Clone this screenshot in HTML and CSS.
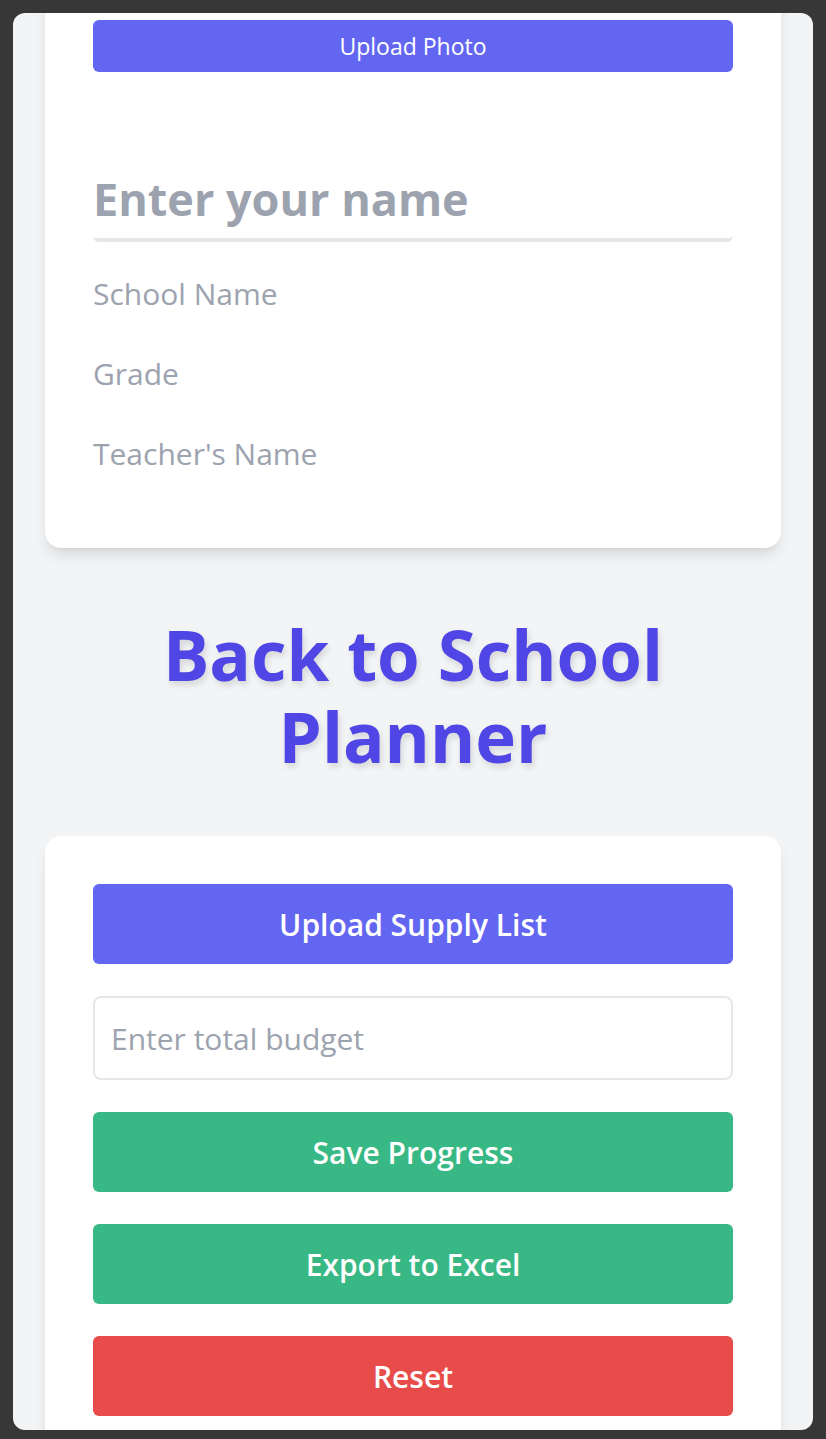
FILE: index.html
```html
<!DOCTYPE html>
<html lang="en">
<head>
<meta charset="utf-8">
<title>Back to School Planner</title>
<link rel="stylesheet" href="styles.css">
</head>
<body>
<div class="window">
  <div class="content">
    <section class="card profile">
      <button class="btn btn-photo">Upload Photo</button>
      <input class="name-input" type="text" placeholder="Enter your name">
      <div class="fields">
        <input class="field" type="text" placeholder="School Name">
        <input class="field" type="text" placeholder="Grade">
        <input class="field" type="text" placeholder="Teacher's Name">
      </div>
    </section>
    <h1 class="title">Back to School Planner</h1>
    <section class="card actions">
      <button class="btn btn-big btn-indigo">Upload Supply List</button>
      <input class="budget" type="text" placeholder="Enter total budget">
      <button class="btn btn-big btn-green">Save Progress</button>
      <button class="btn btn-big btn-green">Export to Excel</button>
      <button class="btn btn-big btn-red">Reset</button>
    </section>
  </div>
</div>
</body>
</html>
```
FILE: styles.css
```css
* { box-sizing: border-box; }
html, body { margin: 0; padding: 0; }
body {
  background: #373737;
  font-family: "Open Sans", "Noto Sans", sans-serif;
  height: 1439px;
  overflow: hidden;
}
.window {
  margin: 13px 13px 0 13px;
  height: 1417px;
  border-radius: 12px;
  overflow: hidden;
  background: #f3f4f6;
}
.content {
  margin-top: -41px;
  padding: 0 32px;
}
.card {
  background: #ffffff;
  border-radius: 16px;
  box-shadow: 0 10px 15px -3px rgba(0,0,0,0.1), 0 4px 6px -4px rgba(0,0,0,0.1);
  padding: 48px;
}
.profile { padding-bottom: 54px; display: flex; flex-direction: column; }
.btn {
  display: block;
  width: 100%;
  border: none;
  color: #fff;
  font-family: inherit;
  border-radius: 6px;
  cursor: pointer;
}
.btn-photo {
  height: 52px;
  background: #6366f1;
  font-size: 23px;
  font-weight: 400;
}
.name-input {
  margin-top: 94px;
  height: 76px;
  border: none;
  border-bottom: 4px solid #e5e7eb;
  border-radius: 0 0 6px 6px;
  padding: 0 0 8px 0;
  font-family: inherit;
  font-size: 45px;
  font-weight: 700;
  color: #374151;
  outline: none;
  background: transparent;
}
.name-input::placeholder { color: #9ca3af; }
.fields {
  margin-top: 12px;
  display: flex;
  flex-direction: column;
}
.field {
  height: 80px;
  border: none;
  padding: 0 0 2px 0;
  font-family: inherit;
  font-size: 30px;
  color: #374151;
  outline: none;
  background: transparent;
}
.field::placeholder { color: #9ca3af; }
.title {
  margin: 0;
  padding: 65px 0 59px;
  text-align: center;
  font-size: 69px;
  line-height: 82px;
  font-weight: 700;
  color: #4f46e5;
  text-shadow: 2px 4px 6px rgba(0,0,0,0.12);
}
.actions { display: flex; flex-direction: column; gap: 32px; }
.btn-big {
  height: 80px;
  font-size: 30px;
  font-weight: 600;
}
.btn-indigo { background: #6366f1; }
.btn-green { background: #38b884; }
.btn-red { background: #e84c4a; }
.budget {
  height: 84px;
  border: 2px solid #e5e7eb;
  border-radius: 8px;
  padding: 0 16px;
  font-family: inherit;
  font-size: 30px;
  color: #374151;
  outline: none;
}
.budget::placeholder { color: #9ca3af; }
```
